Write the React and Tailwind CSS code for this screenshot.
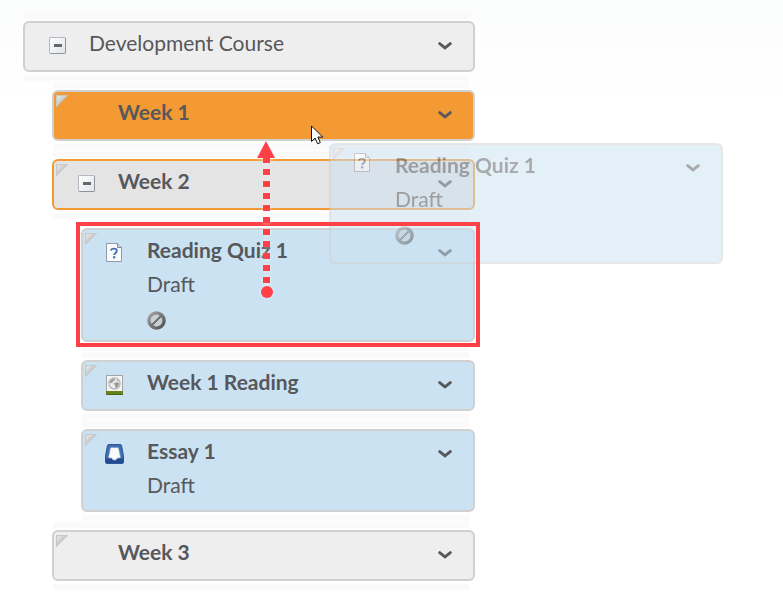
import React from "react";

const course = {
  title: "Development Course",
  tone: "gray",
  root: true,
  expandable: true,
  children: [
    { title: "Week 1", tone: "orange" },
    {
      title: "Week 2",
      tone: "target",
      expandable: true,
      children: [
        { title: "Reading Quiz 1", tone: "blue", icon: "quiz", status: "Draft", hidden: true, selected: true },
        { title: "Week 1 Reading", tone: "blue", icon: "reading" },
        { title: "Essay 1", tone: "blue", icon: "essay", status: "Draft" },
      ],
    },
    { title: "Week 3", tone: "gray" },
  ],
};

const tones = {
  gray: "border-[#d0d0d0] bg-[#eeeeee]",
  orange: "border-[#d0d0d0] bg-[#f39a34]",
  target: "border-[#f39a34] bg-[#e4e4e4]",
  blue: "border-[#d0d0d0] bg-[#cbe2f2]",
};

const QuizIcon = () => (
  <svg width="16" height="19" viewBox="0 0 16 19" aria-hidden="true">
    <path d="M.5.5h11l4 4v14H.5z" fill="#fafbfd" stroke="#929aaa" />
    <path d="M11.5.5v4h4" fill="#d6d9e0" stroke="#7d8493" />
    <path d="M5 7.7C5.2 6 6.5 5.6 7.9 5.6c1.7 0 2.9.8 2.9 2.3 0 2.1-2.6 2-2.6 4.2" fill="none" stroke="#4870ad" strokeWidth="1.9" />
    <rect x="7.1" y="13.2" width="2.2" height="2.2" fill="#4870ad" />
  </svg>
);

const ReadingIcon = () => (
  <svg width="17" height="20" viewBox="0 0 17 20" aria-hidden="true">
    <rect x=".5" y=".5" width="16" height="17" fill="#f4f4f4" stroke="#a5a5a5" />
    <circle cx="8.5" cy="8.5" r="5.6" fill="#ececec" stroke="#b2b2b2" strokeWidth="1.2" />
    <path d="M4 6 7 3.400l2.200.8-.8 1.600-2 .9.4 1.300-1.600.3-1.700-.8z" fill="#a0a0a0" />
    <path d="m8.200 8 2.800-.8 2.200 1.200-.8 2.400-2.200 2.200-1.200-.5.4-2-1.200-1.200z" fill="#979797" />
    <path d="m10.800 4.200 1.900 1.400-.6.9-1.400-.6z" fill="#b0b0b0" />
    <rect y="16" width="17" height="4" fill="#66821c" />
    <path d="M0 19.500h17" stroke="#4c660d" />
  </svg>
);

const EssayIcon = () => (
  <svg width="19" height="20" viewBox="0 0 19 20" aria-hidden="true">
    <path d="M4 .5h11q1.300 0 1.600 1.300L18.500 12v6q0 1.500-1.500 1.500H2Q.5 19.500.5 18v-6L2.400 1.800Q2.700.5 4 .5z" fill="#3f6eb3" stroke="#2a559a" />
    <path d="M1 14.500h17V18q0 1-1 1H2q-1 0-1-1z" fill="#234b8e" />
    <path d="M6.500 3.500h6q1 0 1.200 1L15.500 13q0 1-1 1h-2l-1.500 2H8l-1.500-2h-2q-1 0-1-1l1.800-8.500q.2-1 1.200-1z" fill="#fafafa" stroke="#7d9fd0" strokeWidth=".7" />
  </svg>
);

const HiddenIcon = () => (
  <svg width="19" height="19" viewBox="0 0 19 19" role="img" aria-label="Hidden">
    <defs>
      <linearGradient id="hiddenRing" x1="0" y1="0" x2="1" y2="1">
        <stop offset="0" stopColor="#a5a5a5" />
        <stop offset="1" stopColor="#505050" />
      </linearGradient>
    </defs>
    <circle cx="9.500" cy="9.500" r="7.600" fill="#c8d1d8" stroke="url(#hiddenRing)" strokeWidth="3.400" />
    <path d="M4.500 14.500l10-10" stroke="#747474" strokeWidth="3.400" />
    <path d="M4.600 12.200l7.600-7.600M6.800 14.400l7.600-7.600" stroke="#dce5eb" strokeWidth="1" />
  </svg>
);

const icons = { quiz: QuizIcon, reading: ReadingIcon, essay: EssayIcon };

const Corner = () => (
  <svg className="absolute left-[2px] top-[3px]" width="12" height="12" viewBox="0 0 12 12" aria-hidden="true">
    <defs>
      <linearGradient id="corner" x1="0" y1="0" x2=".5" y2=".5">
        <stop offset="0" stopColor="#d2d2d2" />
        <stop offset=".4" stopColor="#e2e2e2" />
        <stop offset="1" stopColor="#c4c4c4" />
      </linearGradient>
    </defs>
    <path d="M0 0h12.500L0 12.500z" fill="url(#corner)" />
    <path d="M0 .5h12M.5 0v12" stroke="#c8c8c8" />
  </svg>
);

const Toggle = ({ label }) => (
  <button
    type="button"
    aria-label={`Collapse ${label}`}
    className="flex h-[17px] w-[17px] items-center justify-center rounded-xs border border-[#b4b8c2] border-r-[#8f939e] border-b-[#8f939e] bg-linear-to-br from-white to-[#e2e4ea]"
  >
    <span className="h-[3px] w-2 bg-[#65686c]" />
  </button>
);

const Card = ({ item, className = "pb-[10px]", iconClassName = "pt-[11px]" }) => {
  const Icon = icons[item.icon];
  return (
    <div className={`relative flex rounded-md border-2 pt-[3px] ${tones[item.tone]} ${className}`}>
      {!item.root && <Corner />}
      <div className={`flex w-16 shrink-0 justify-start pl-6 ${iconClassName}`}>
        {item.expandable && <Toggle label={item.title} />}
        {Icon && (
          <span className="-ml-1 flex h-[17px] w-[22px] items-center justify-center">
            <Icon />
          </span>
        )}
      </div>
      <div className="min-w-0 flex-1 text-[21px] leading-[34px] text-[#56585b]">
        <h2 className={item.root ? "font-normal" : "font-bold"}>{item.title}</h2>
        {item.status && <p className="h-8">{item.status}</p>}
        {item.hidden && (
          <div className="flex h-[31px] items-end">
            <HiddenIcon />
          </div>
        )}
      </div>
      <button
        type="button"
        aria-label={`Actions for ${item.title}`}
        className="mr-4 mt-1.5 flex h-7 w-6 shrink-0 items-center justify-center text-[#56585b]"
      >
        <svg width="14" height="8" viewBox="0 0 14 8" fill="none" aria-hidden="true">
          <path d="M1.700 1.600 7 5.800l5.300-4.200" stroke="currentColor" strokeWidth="2.900" strokeLinecap="round" />
        </svg>
      </button>
    </div>
  );
};

const DragArrow = () => (
  <svg
    className="absolute left-[172px] top-[-87px] z-20 drop-shadow-[0_0_2px_rgba(255,255,255,0.6)]"
    width="26"
    height="160"
    viewBox="0 0 26 160"
    aria-hidden="true"
  >
    <path d="M13.500 16v128" stroke="#fd4146" strokeWidth="7" strokeDasharray="6 6" />
    <path d="M13 0l9 17H4z" fill="#fd4146" />
    <circle cx="14" cy="151" r="6" fill="#fd4146" />
  </svg>
);

const Strip = () => <div className="ml-px mr-[6px] h-[6px] bg-[#fafafa]" />;

const TreeItem = ({ item }) => (
  <li>
    <div className="mb-px">
      <Strip />
      <div className="relative mt-[2px] mb-[3px]">
        <Card item={item} />
        {item.selected && (
          <>
            <div className="absolute -inset-x-[5px] -top-[6px] -bottom-[5px] z-20 border-4 border-[#fd4146]" />
            <DragArrow />
          </>
        )}
      </div>
      <Strip />
    </div>
    {item.children && (
      <ul className="pl-[29px]">
        {item.children.map((child) => (
          <TreeItem key={child.title} item={child} />
        ))}
      </ul>
    )}
  </li>
);

const App = () => {
  const dragged = { title: "Reading Quiz 1", tone: "blue", icon: "quiz", status: "Draft", hidden: true };

  return (
    <main className="relative min-h-screen bg-linear-to-b from-[#fbfcfc] to-white to-[100px] pt-[13px] pl-[23px] font-[Lato,sans-serif]">
      <ul className="w-full max-w-[452px]">
        <TreeItem item={course} />
      </ul>

      {/* Item being dragged */}
      <div className="absolute left-[329px] top-[143px] z-10 w-[394px] opacity-50">
        <Card item={dragged} className="pb-[17px]" iconClassName="pt-1.5" />
      </div>

      {/* Mouse pointer */}
      <svg className="absolute left-[311px] top-[125px] z-30" width="13" height="20" viewBox="0 0 13 20" aria-hidden="true">
        <path d="M.5 1v15.500l3.600-3.400 2.500 5.700 2.700-1.200-2.400-5.500h4.900z" fill="#fff" stroke="#111" />
      </svg>
    </main>
  );
};

export default App;
